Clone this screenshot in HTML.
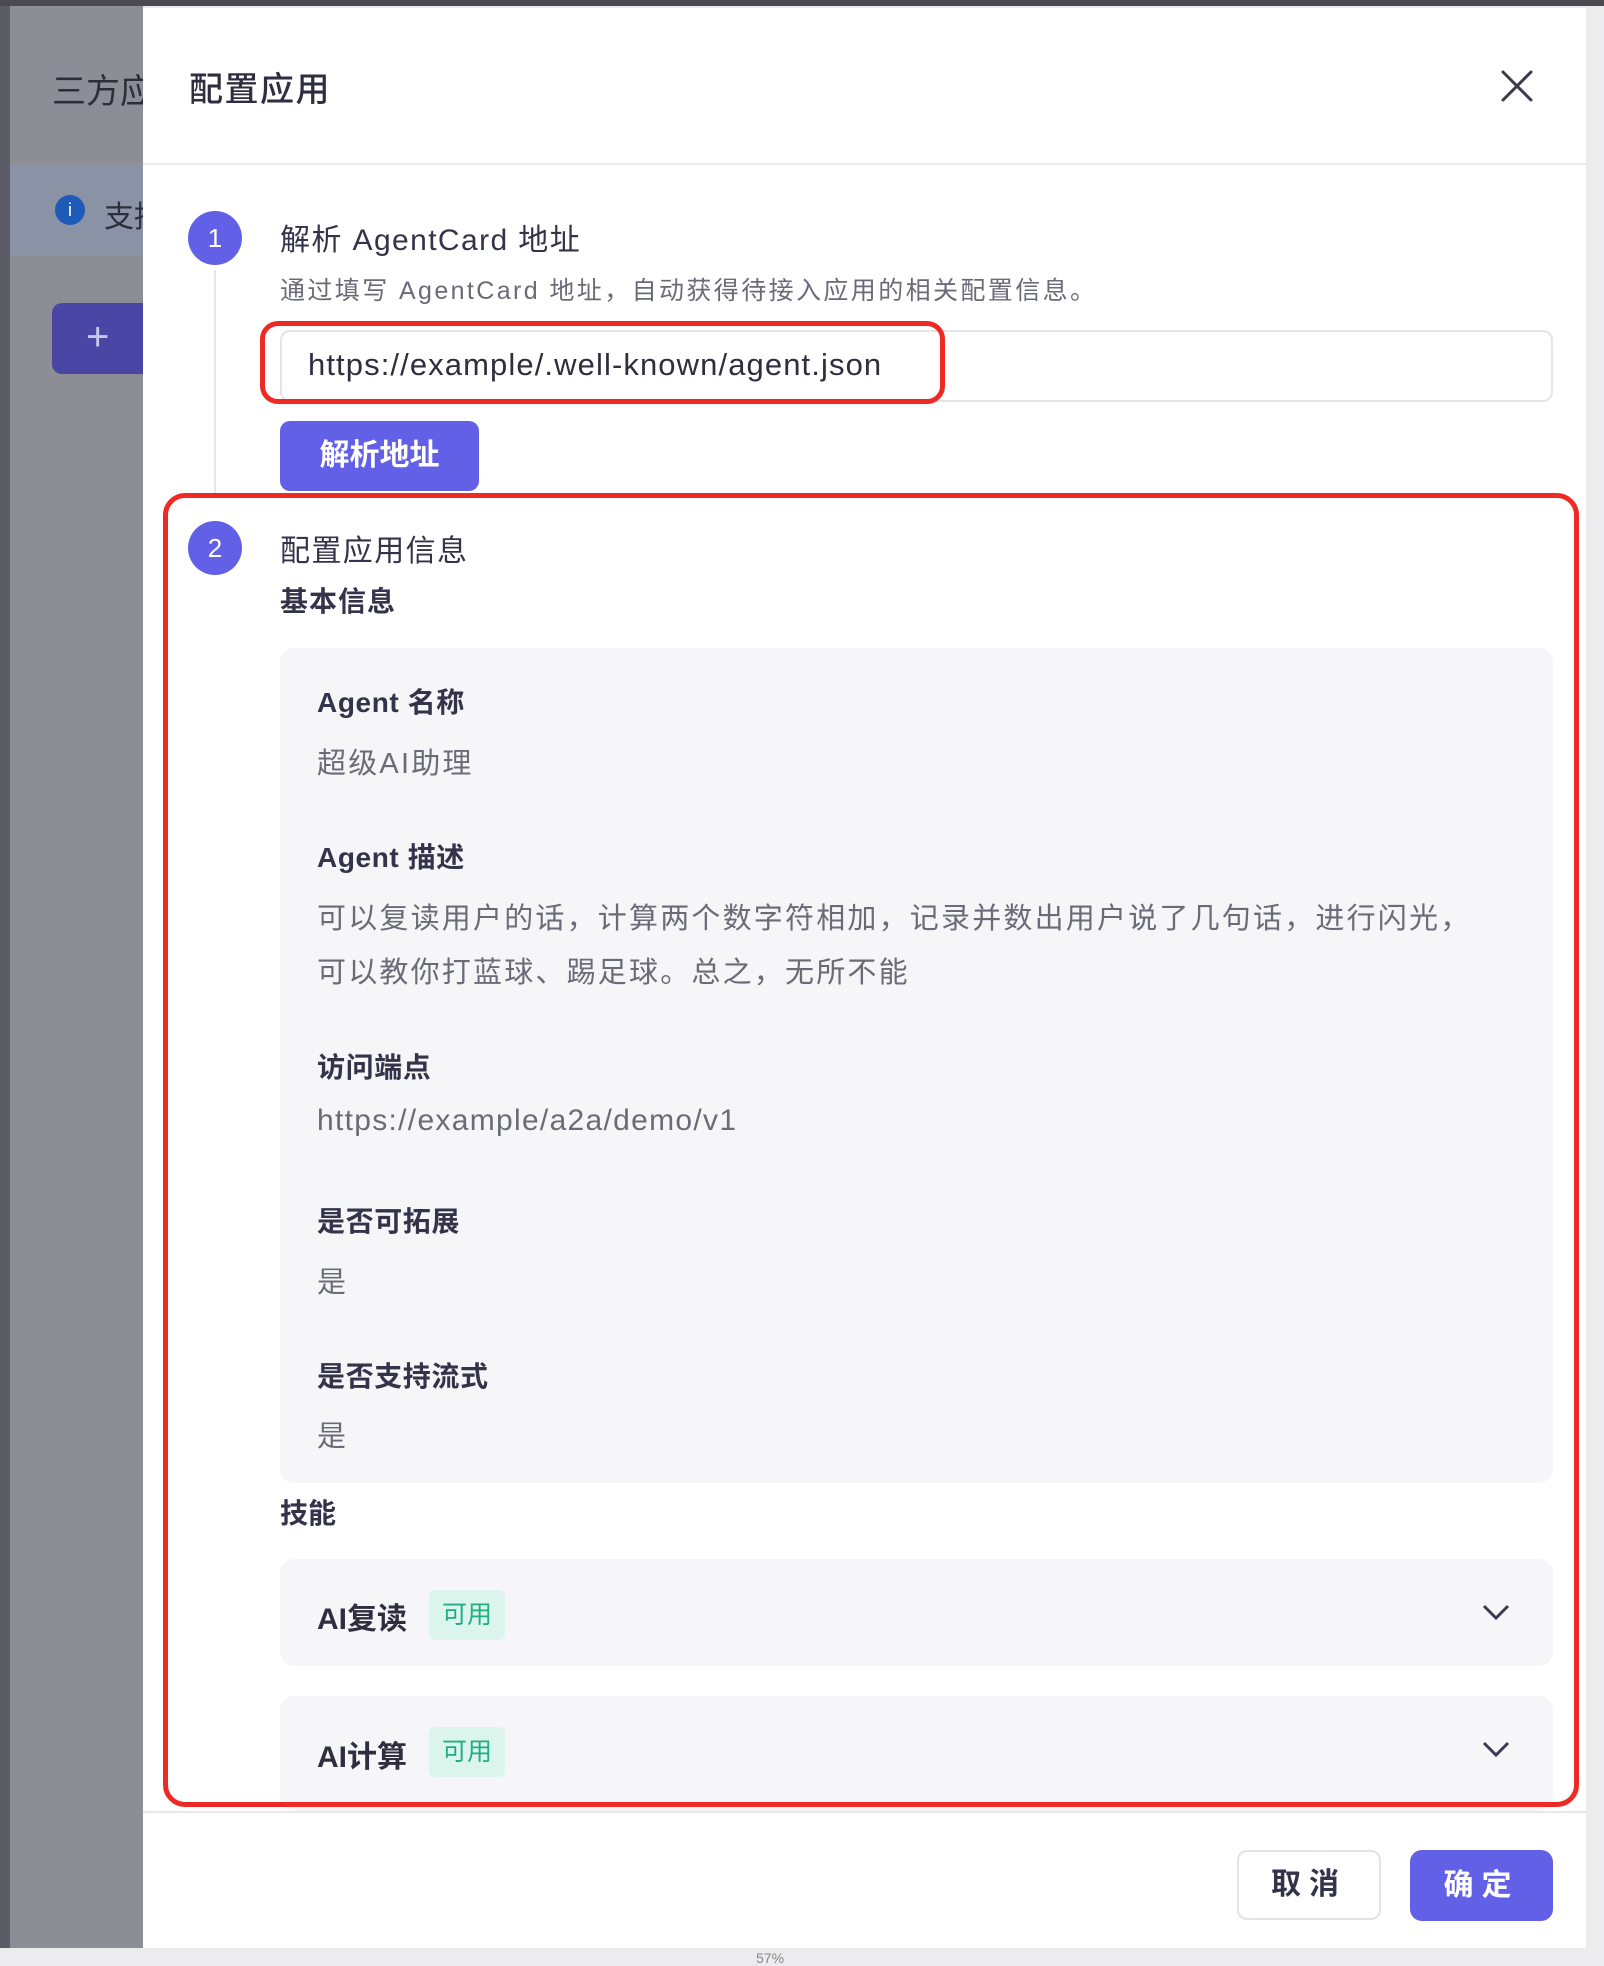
<!DOCTYPE html>
<html><head><meta charset="utf-8"><style>
*{margin:0;padding:0;box-sizing:border-box}
body{width:1604px;height:1962px;position:relative;overflow:hidden;background:#ececee;font-family:"Liberation Sans","Noto Sans CJK SC",sans-serif;color:#2f2f45}
.a{position:absolute;white-space:nowrap}
.lbl{font-size:28px;font-weight:600;color:#33334a;left:317px;letter-spacing:0.6px}
.val{font-size:29px;color:#6b6b78;left:317px;letter-spacing:2.2px}
.circ{position:absolute;width:54px;height:54px;border-radius:50%;background:#6360e8;color:#fff;font-size:26px;text-align:center;line-height:54px}
.card{position:absolute;left:280px;width:1273px;background:#f6f6f8;border-radius:14px}
.tag{position:absolute;background:#dcf5ec;color:#1fae84;font-size:25px;border-radius:6px;width:76px;height:50px;line-height:50px;text-align:center}
</style></head><body>
<div class="a" style="left:0;top:0;width:1604px;height:6px;background:#4a4a50"></div>
<div class="a" style="left:0;top:6px;width:143px;height:1942px;background:#8d8d95"></div>
<div class="a" style="left:0;top:6px;width:10px;height:1942px;background:#5c5c66"></div>
<div class="a" style="left:10px;top:164px;width:133px;height:92px;background:#8a93a6"></div>
<div class="a" style="left:52px;top:64px;font-size:34px;color:#2e2e3a">三方应</div>
<div class="a" style="left:55px;top:195px;width:30px;height:30px;border-radius:50%;background:#1e5bb8;color:#fff;font-size:18px;text-align:center;line-height:30px">i</div>
<div class="a" style="left:104px;top:192px;font-size:30px;color:#2e2e3a">支持</div>
<div class="a" style="left:52px;top:303px;width:100px;height:71px;border-radius:10px;background:#4a46a6;color:#c8c8e8;font-size:40px;line-height:68px;padding-left:34px">+</div>
<div class="a" style="left:143px;top:8px;width:1443px;height:1940px;background:#fff"></div>
<div class="a" style="left:1586px;top:6px;width:18px;height:1942px;background:#ececee"></div>
<div class="a" style="left:189px;top:62px;font-size:34px;font-weight:500;color:#2e2e3f;letter-spacing:1.5px">配置应用</div>
<svg class="a" style="left:1500px;top:69px" width="34" height="34" viewBox="0 0 34 34"><path d="M3 3L31 31M31 3L3 31" stroke="#3a3a4a" stroke-width="3" stroke-linecap="round"/></svg>
<div class="a" style="left:143px;top:163px;width:1443px;height:2px;background:#ececf0"></div>
<div class="a" style="left:214px;top:270px;width:2px;height:228px;background:#e6e6ee"></div>
<div class="circ" style="left:188px;top:211px">1</div>
<div class="a" style="left:280px;top:215px;font-size:30px;color:#33334a;letter-spacing:1.4px">解析 AgentCard 地址</div>
<div class="a" style="left:280px;top:271px;font-size:25px;color:#6b6b78;letter-spacing:2.4px">通过填写 AgentCard 地址，自动获得待接入应用的相关配置信息。</div>
<div class="a" style="left:280px;top:330px;width:1273px;height:72px;border:2px solid #e4e4ea;border-radius:10px"></div>
<div class="a" style="left:308px;top:347px;font-size:31px;color:#2e2e3f;letter-spacing:1.1px">https://example/.well-known/agent.json</div>
<div class="a" style="left:260px;top:321px;width:685px;height:83px;border:5px solid #ee2a24;border-radius:18px"></div>
<div class="a" style="left:280px;top:421px;width:199px;height:70px;background:#6360e8;border-radius:10px;color:#fff;font-size:30px;font-weight:600;text-align:center;line-height:70px">解析地址</div>
<div class="circ" style="left:188px;top:521px">2</div>
<div class="a" style="left:280px;top:526px;font-size:30px;color:#33334a;letter-spacing:1.4px">配置应用信息</div>
<div class="a" style="left:280px;top:580px;font-size:28px;font-weight:700;color:#33334a;letter-spacing:1px">基本信息</div>
<div class="card" style="top:648px;height:835px"></div>
<div class="a lbl" style="top:681px">Agent 名称</div>
<div class="a val" style="top:740px">超级AI助理</div>
<div class="a lbl" style="top:836px">Agent 描述</div>
<div class="a val" style="top:895px">可以复读用户的话，计算两个数字符相加，记录并数出用户说了几句话，进行闪光，</div>
<div class="a val" style="top:949px">可以教你打蓝球、踢足球。总之，无所不能</div>
<div class="a lbl" style="top:1046px">访问端点</div>
<div class="a val" style="top:1104px;letter-spacing:1.3px;font-size:30px">https://example/a2a/demo/v1</div>
<div class="a lbl" style="top:1200px">是否可拓展</div>
<div class="a val" style="top:1259px">是</div>
<div class="a lbl" style="top:1355px">是否支持流式</div>
<div class="a val" style="top:1413px">是</div>
<div class="a" style="left:280px;top:1492px;font-size:28px;font-weight:700;color:#33334a">技能</div>
<div class="card" style="top:1559px;height:107px"></div>
<div class="a" style="left:317px;top:1594px;font-size:30px;font-weight:600;color:#2e2e3f">AI复读</div>
<div class="tag" style="left:429px;top:1590px">可用</div>
<svg class="a" style="left:1482px;top:1603px" width="28" height="18" viewBox="0 0 28 18"><path d="M2 3L14 15L26 3" fill="none" stroke="#3a3a52" stroke-width="3"/></svg>
<div class="card" style="top:1696px;height:115px"></div>
<div class="a" style="left:317px;top:1732px;font-size:30px;font-weight:600;color:#2e2e3f">AI计算</div>
<div class="tag" style="left:429px;top:1727px">可用</div>
<svg class="a" style="left:1482px;top:1740px" width="28" height="18" viewBox="0 0 28 18"><path d="M2 3L14 15L26 3" fill="none" stroke="#3a3a52" stroke-width="3"/></svg>
<div class="a" style="left:143px;top:1811px;width:1443px;height:137px;background:#fff;border-top:2px solid #e8e8ee"></div>
<div class="a" style="left:163px;top:493px;width:1416px;height:1314px;border:5px solid #ee2a24;border-radius:22px"></div>
<div class="a" style="left:1237px;top:1850px;width:144px;height:70px;border:2px solid #e2e2ea;border-radius:10px;font-size:30px;font-weight:600;text-align:center;line-height:66px;color:#33334a;letter-spacing:8px">取消</div>
<div class="a" style="left:1410px;top:1850px;width:143px;height:71px;background:#6360e8;border-radius:12px;font-size:30px;font-weight:600;text-align:center;line-height:71px;color:#fff;letter-spacing:8px">确定</div>
<div class="a" style="left:756px;top:1950px;font-size:14px;color:#888">57%</div>
</body></html>
